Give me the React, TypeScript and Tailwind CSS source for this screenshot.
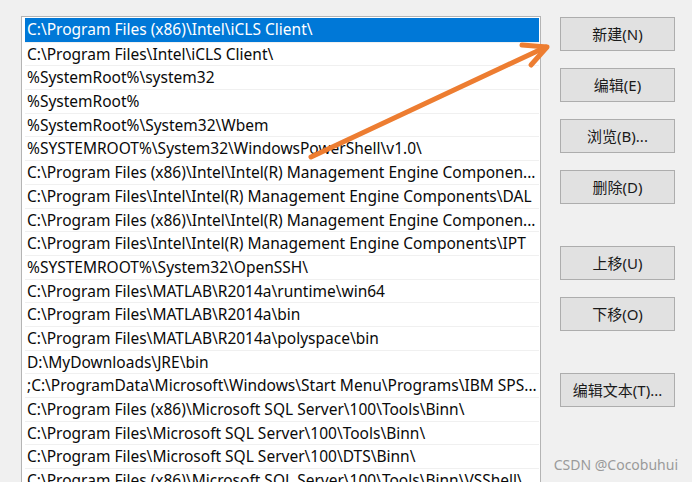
const paths = [
  "C:\\Program Files (x86)\\Intel\\iCLS Client\\",
  "C:\\Program Files\\Intel\\iCLS Client\\",
  "%SystemRoot%\\system32",
  "%SystemRoot%",
  "%SystemRoot%\\System32\\Wbem",
  "%SYSTEMROOT%\\System32\\WindowsPowerShell\\v1.0\\",
  "C:\\Program Files (x86)\\Intel\\Intel(R) Management Engine Componen...",
  "C:\\Program Files\\Intel\\Intel(R) Management Engine Components\\DAL",
  "C:\\Program Files (x86)\\Intel\\Intel(R) Management Engine Componen...",
  "C:\\Program Files\\Intel\\Intel(R) Management Engine Components\\IPT",
  "%SYSTEMROOT%\\System32\\OpenSSH\\",
  "C:\\Program Files\\MATLAB\\R2014a\\runtime\\win64",
  "C:\\Program Files\\MATLAB\\R2014a\\bin",
  "C:\\Program Files\\MATLAB\\R2014a\\polyspace\\bin",
  "D:\\MyDownloads\\JRE\\bin",
  ";C:\\ProgramData\\Microsoft\\Windows\\Start Menu\\Programs\\IBM SPS...",
  "C:\\Program Files (x86)\\Microsoft SQL Server\\100\\Tools\\Binn\\",
  "C:\\Program Files\\Microsoft SQL Server\\100\\Tools\\Binn\\",
  "C:\\Program Files\\Microsoft SQL Server\\100\\DTS\\Binn\\",
  "C:\\Program Files (x86)\\Microsoft SQL Server\\100\\Tools\\Binn\\VSShell\\",
];

const buttons = [
  { label: "新建(N)", gap: "mt-0" },
  { label: "编辑(E)", gap: "mt-[17px]" },
  { label: "浏览(B)...", gap: "mt-[17px]" },
  { label: "删除(D)", gap: "mt-[17px]" },
  { label: "上移(U)", gap: "mt-[42px]" },
  { label: "下移(O)", gap: "mt-[17px]" },
  { label: "编辑文本(T)...", gap: "mt-[42px]" },
];

export default function App() {
  return (
    <div
      className="relative flex h-[482px] w-[692px] overflow-hidden bg-[#f0f0f0] pl-[21px] pt-[16px]"
      style={{ fontFamily: '"Noto Sans", "Noto Sans CJK SC", sans-serif' }}
    >
      <div className="h-[480px] w-[520px] shrink-0 border border-[#b4b4b4] bg-white pl-[3px] pr-[1px] pt-[1px]">
        {paths.map((path, i) => (
          <div
            key={i}
            className={
              i === 0
                ? "h-[23.7px] overflow-hidden whitespace-nowrap bg-[#0078d7] pl-[2px] text-[15.5px] leading-[23px] text-white"
                : "h-[23.7px] overflow-hidden whitespace-nowrap border-t border-[#f0f0f0] pl-[2px] text-[15.5px] leading-[22px] text-[#0a0a0a]"
            }
          >
            {path}
          </div>
        ))}
      </div>

      <div className="ml-[19px] flex w-[115px] shrink-0 flex-col pt-[1px]">
        {buttons.map((b) => (
          <button
            key={b.label}
            className={`${b.gap} h-[34px] border border-[#adadad] bg-[#e1e1e1] text-[15px] text-[#1a1a1a]`}
          >
            {b.label}
          </button>
        ))}
      </div>

      <span className="absolute bottom-[7px] right-[14px] text-[14px] text-[#9a9a9a]">CSDN @Cocobuhui</span>

      <svg className="pointer-events-none absolute left-0 top-0" width="692" height="482">
        <g stroke="#ed7d31" strokeWidth="5" strokeLinecap="round" fill="none">
          <line x1="311" y1="157" x2="546" y2="47" />
          <polyline points="522,45 547,47 531,65" strokeLinejoin="round" />
        </g>
      </svg>
    </div>
  );
}
